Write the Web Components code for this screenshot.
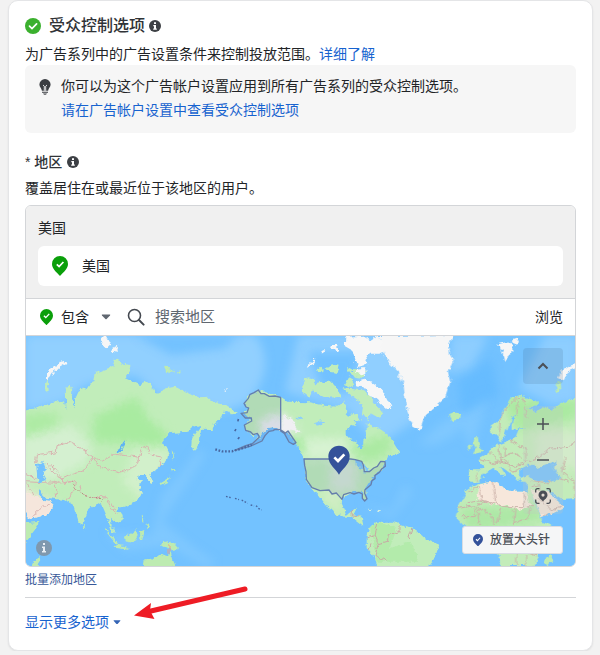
<!DOCTYPE html>
<html lang="zh-CN">
<head>
<meta charset="utf-8">
<meta name="viewport" content="width=device-width, initial-scale=1">
<title>受众控制选项</title>
<style>
  body{margin:0;padding:0 7px 0 8px;background:#f2f2f2;color:#222427;
       font:400 14px/24px "Liberation Sans","Noto Sans CJK SC",sans-serif;
       --link:#1763cf;--line:#d3d5d8;--green:#0a9f0a;--navy:#34529a;--ink:#3a3f45}
</style>
</head>
<body>
<audience-card>
  <span slot="title">受众控制选项</span>
  <span slot="intro">为广告系列中的广告设置条件来控制投放范围。</span>
  <tip-banner>
    你可以为这个广告帐户设置应用到所有广告系列的受众控制选项。
    <a slot="link" href="#settings">请在广告帐户设置中查看受众控制选项</a>
  </tip-banner>
  <location-field>
    <span slot="label">地区</span>
    <span slot="hint">覆盖居住在或最近位于该地区的用户。</span>
    <location-item slot="items">美国</location-item>
    <location-search slot="search"></location-search>
    <location-map slot="map"></location-map>
  </location-field>
  <more-options slot="footer"></more-options>
</audience-card>

<script>
(function () {
  // every element shares the same boot: style + markup into an open root
  function define(name, html, setup) {
    customElements.define(name, class extends HTMLElement {
      constructor() {
        super();
        const root = this.attachShadow({ mode: "open" });
        root.innerHTML = `<style>*{box-sizing:border-box}button,input,select{font:inherit;color:inherit;margin:0}
          a{color:var(--link);text-decoration:none}</style>` + html;
        if (setup) setup(root, this);
      }
    });
  }

  // ---- icons ----
  define("info-icon", `
    <style>:host{display:inline-flex;color:#3d4045}svg{display:block}</style>
    <svg width="12" height="12" viewBox="0 0 12 12" aria-hidden="true"><circle cx="6" cy="6" r="6" fill="currentColor"/>
      <path d="M5 2.2h2v1.9H5zM4.3 5H7v3.5h.8v1.2H4.2V8.500H5V6.200h-.7z" fill="#fff"/></svg>`);

  define("pin-icon", `
    <style>:host{display:inline-flex;width:13px;color:var(--green)}svg{display:block;width:100%;height:auto}</style>
    <svg viewBox="0 0 16 20" aria-hidden="true">
      <path d="M8 0a8 8 0 0 1 8 8c0 4.800-4.300 8-8 12C4.300 16 0 12.800 0 8a8 8 0 0 1 8-8z" fill="currentColor"/>
      <path d="M4.800 8.400l2.300 2.200L11.400 6" fill="none" stroke="#fff" stroke-width="1.700"/></svg>`);

  define("caret-icon", `
    <style>:host{display:inline-flex;width:10px;color:#606770}svg{display:block;width:100%;height:auto}</style>
    <svg viewBox="0 0 10 6" aria-hidden="true"><path d="M1.200.4h7.600q.8.200.2 1L5.600 5.100q-.6.500-1.200 0L1 1.400Q.4.600 1.200.4z" fill="currentColor"/></svg>`);

  // ---- card ----
  define("audience-card", `
    <style>
      :host{display:block;background:#fff;border:1px solid #e4e5e7;border-radius:10px;padding:12px 16px 16px;
            box-shadow:0 1px 2px rgba(0,0,0,.08)}
      h2{display:flex;align-items:center;margin:0;font-size:16px;font-weight:500;line-height:26px;color:#303337}
      .ok{margin-right:8px}
      info-icon{margin-left:4px}
      p{margin:4px 0 0;line-height:22px}
    </style>
    <h2><svg class="ok" width="16" height="16" viewBox="0 0 16 16" aria-hidden="true"><circle cx="8" cy="8" r="8" fill="#3bb02e"/>
      <path d="M4.500 8.200l2.500 2.400 4.600-4.700" fill="none" stroke="#fff" stroke-width="1.700" stroke-linecap="round"/></svg>
      <slot name="title"></slot><info-icon></info-icon></h2>
    <p><slot name="intro"></slot><a href="#learn">详细了解</a></p>
    <slot></slot>
    <slot name="footer"></slot>`);

  define("tip-banner", `
    <style>
      :host{display:flex;gap:10px;background:#f6f6f6;border-radius:6px;padding:9px 14px 11px}
      svg{flex:none;margin-top:5px}
      ::slotted(a){display:block;color:var(--link);text-decoration:none}
    </style>
    <svg width="12" height="16" viewBox="0 0 12 16" aria-hidden="true">
      <path d="M6 0a5.600 5.600 0 0 1 5.600 5.600c0 2.600-2.100 3.600-2.500 6.200H2.900C2.500 9.200.4 8.200.4 5.600A5.600 5.600 0 0 1 6 0z" fill="#3a3d42"/>
      <path d="M4 6l1.300 1.200V11.800M8 6L6.700 7.200V11.800" fill="none" stroke="#f5f6f7" stroke-width=".9"/>
      <path d="M3 12.700h6v1.100H3zM4 14.600h4q-.7 1.200-2 1.200t-2-1.200z" fill="#3a3d42"/></svg>
    <div><slot></slot><slot name="link"></slot></div>`);

  // ---- location field ----
  define("location-field", `
    <style>
      :host{display:block;margin-top:16px}
      h3{display:flex;align-items:center;gap:5px;margin:0;font-size:14px;font-weight:500;line-height:26px;color:#303337}
      p{margin:0;line-height:26px}
      .panel{margin-top:4px;border:1px solid var(--line);border-radius:6px;overflow:hidden}
      .chosen{background:#f0f0f0;padding:12px;border-bottom:1px solid var(--line)}
      .group{line-height:20px;margin-bottom:8px}
      .bulk{display:block;margin-top:4px;font-size:12px;line-height:18px;color:#385898}
    </style>
    <h3><span>* <slot name="label"></slot></span><info-icon></info-icon></h3>
    <p><slot name="hint"></slot></p>
    <div class="panel">
      <div class="chosen"><div class="group">美国</div><slot name="items"></slot></div>
      <slot name="search"></slot>
      <slot name="map"></slot>
    </div>
    <a class="bulk" href="#bulk">批量添加地区</a>`);

  define("location-item", `
    <style>:host{display:flex;align-items:center;gap:14px;height:40px;padding:0 14px;background:#fff;border-radius:6px}
      pin-icon{width:16px}</style>
    <pin-icon></pin-icon><span><slot></slot></span>`);

  define("location-search", `
    <style>
      :host{display:flex;box-sizing:border-box;align-items:center;height:37px;padding:0 12px 0 14px;background:#fff;border-bottom:1px solid var(--line)}
      .mode{display:flex;align-items:center;gap:8px}
      select{appearance:none;border:0;background:none;padding:0;width:32px;height:24px;line-height:24px;outline:0}
      .glass{flex:none;margin:0 10px 0 16px}
      label{display:contents}
      input{flex:1;min-width:0;border:0;padding:0;background:none;font-size:15px;line-height:24px;outline:0}
      input::placeholder{color:#606770;opacity:1}
      button{border:0;background:none;padding:0;line-height:24px}
    </style>
    <label class="mode"><pin-icon></pin-icon>
      <span class="mode"><select aria-label="包含或排除"><option>包含</option><option>排除</option></select><caret-icon></caret-icon></span></label>
    <label><svg class="glass" width="18" height="18" viewBox="0 0 18 18" aria-hidden="true">
      <circle cx="7.500" cy="7.500" r="6" fill="none" stroke="#444950" stroke-width="1.600"/><path d="M12 12l4.600 4.600" stroke="#444950" stroke-width="2" stroke-linecap="round"/></svg>
      <input type="text" placeholder="搜索地区" aria-label="搜索地区"></label>
    <button type="button">浏览</button>`);

  // ---- map ----
  // three tiles side by side, each drawn in its own coordinates
  define("location-map", `
    <style>
      :host{display:block;position:relative;background:#74c2ff}
      .world{display:block;width:100%;height:auto}
      .tools{position:absolute;inset:0;display:flex;flex-direction:column;align-items:flex-end;gap:12px;padding:12px}
      .tools button{display:flex;align-items:center;justify-content:center;border:0;padding:0;width:40px;height:36px;
                    background:none;color:#4b4f56}
      .tools .up{background:rgba(70,100,130,.16);border-radius:4px}
      .stack{margin-top:auto;background:rgba(190,200,195,.25);border-radius:4px}
      .tools .drop{width:auto;height:28px;padding:0 12px 0 10px;gap:7px;background:#f5f6f7;border:1px solid #d8dce2;border-radius:3px;
                   font-size:12px;font-weight:500;line-height:20px;color:#4b4f56}
      .drop pin-icon{width:10px;color:var(--navy)}
      .about{position:absolute;left:10px;bottom:10px;width:16px;height:16px;padding:0;border:0;background:none}
      .about svg{display:block}
    </style>
    <svg class="world" viewBox="3 3 1647 690" role="img" aria-label="地图">
      <defs>
        <filter id="coast" x="-5%" y="-5%" width="110%" height="110%">
          <feTurbulence type="fractalNoise" baseFrequency=".06" numOctaves="3" seed="4"/>
          <feDisplacementMap in="SourceGraphic" scale="18" xChannelSelector="R" yChannelSelector="G"/>
        </filter>
        <filter id="soft" x="-20%" y="-20%" width="140%" height="140%"><feGaussianBlur stdDeviation="14"/></filter>
        <clipPath id="asia"><path d="M-10 229L25 222 60 208 85 200 115 197 124 222 122 155 135 150 142 165 140 190 150 224 150 190 160 168 175 158 188 162 205 135 210 115 235 105 262 95 270 72 285 80 312 90 315 108 300 130 345 150 372 140 392 175 425 160 450 155 490 175 520 190 550 188 570 205 600 208 625 224 642 236 620 238 600 228 595 242 565 270 560 285 528 284 525 318 510 348 499 335 500 313 530 270 500 275 490 290 430 295 410 325 425 335 432 350 425 378 375 415 383 440 375 447 366 422 338 423 335 435 352 436 342 450 350 475 340 495 300 515 275 518 290 540 290 558 275 565 258 548 260 570 270 590 262 590 246 545 230 508 215 502 190 525 172 570 160 560 145 510 120 495 60 488 44 465 38 478 55 495 75 498 85 510 75 535 15 552 -10 520z"/></clipPath>
        <clipPath id="na"><path d="M242 185L175 165 150 178 132 205 145 220 125 235 155 250 135 270 135 285 155 300 180 300 165 320 205 282 225 278 242 285 260 290 288 325 305 350 312 372 316 430 335 460 355 480 390 525 435 545 455 545 490 572 485 545 460 540 472 515 440 540 425 505 427 490 460 470 485 470 490 497 500 495 495 465 525 420 555 390 560 365 600 350 575 310 540 285 500 265 500 290 490 315 490 342 478 342 470 320 440 310 440 285 470 265 440 235 433 195 410 215 375 212 330 202 265 200z"/></clipPath>
        <clipPath id="euro"><path d="M575 188L560 190 530 205 500 225 475 215 455 235 430 220 460 208 445 195 425 190 405 180 380 190 355 225 340 255 318 270 315 290 335 300 345 320 360 305 380 250 395 230 380 270 380 285 425 275 400 285 390 310 340 328 315 340 310 355 285 368 280 375 300 395 290 403 252 403 255 440 280 440 300 415 325 398 355 425 365 425 345 392 390 425 397 440 405 425 405 403 440 385 455 400 485 390 515 375 500 400 530 430 480 440 450 440 430 420 405 428 408 440 425 440 425 470 380 470 350 458 330 440 275 448 245 468 220 515 215 550 240 575 340 600 345 693 450 693 465 640 470 590 500 570 470 560 440 475 470 550 540 515 500 480 480 460 530 495 575 492z"/></clipPath>
      </defs>

      <rect width="1660" height="700" fill="#73c2ff"/>
      <g fill="#99d3ff" filter="url(#soft)">
        <path d="M0 0H690Q760 90 670 200L600 230 400 180 330 120 180 150 120 200 0 230z" opacity=".8"/>
        <path d="M820 0H1120L1180 250 1060 330 960 220 780 170z" opacity=".75"/>
        <path d="M1280 0h110l-50 100-70 20zM1560 0H1660V200L1580 210 1480 160z" opacity=".7"/>
        <path d="M240 590l140 10 30-120 70-80 40-60 20 20-70 110-60 90 100 80 60 40-20 20-120-70-130 20z" opacity=".35"/>
        <path d="M1180 330l60-60 110-60-60 90-60 30zM1300 250l90-80-50 180z" opacity=".35"/>
        <path d="M1000 500l100 30 40-80 20 20-60 80z" opacity=".35"/>
      </g>
      <g fill="#5fb8ff" filter="url(#soft)" opacity=".6"><path d="M330 0H640L600 40 440 60zM1300 140l100-70 20 110-110 60zM850 50l160 0-40 130-80-20z"/></g>

      <g filter="url(#coast)">
        <g clip-path="url(#asia)">
          <rect x="-10" width="700" height="610" fill="#c1edba"/>
          <g filter="url(#soft)">
            <path d="M-10 235h110l-10 65-100 10z" fill="#aeeba4"/>
            <path d="M205 245l130-60 30 60 70 60-30 30-90-10-110-5z" fill="#a9eba0"/>
            <path d="M-10 310l150-40 60 60-10 50-110 60-90-10z" fill="#d4f0d0"/>
            <path d="M330 340l100 0-10 80-60 80-70-60z" fill="#d2f0cb"/>
            <path d="M-10 450l60 40 50 20-40 60-80-10z" fill="#f8e8de"/>
          </g>
          <path d="M-10 465l50 25 45 5 10 55-105 20z" fill="#f5e6dc"/>
          <path d="M33 388l22-8 6 18-8 20 10 18-16 6-10-18z" fill="#73c2ff"/>
          <path d="M275 352l14-8 12-26" stroke="#5eb4f4" stroke-width="7" fill="none"/>
          <g fill="none" stroke="#d8b3b0" stroke-width="3">
            <path d="M32 385l2-25 60-10 2-18 38-10 35 18 38 28 25 10 36-20 72 8 14-28 12-5 15 28 30 5-8 38-14 20"/>
            <path d="M205 368l18 28 62 15 30-8 25-25 0-15M205 368l-28 40-40 12-25 12-50-38M60 380l45 35 12 30 25-8"/>
            <path d="M-10 410l45 20M0 440l90 5 5 40M90 445l60-5 0 20-20 35M165 450l5 25 35 15 35-5 15 30M210 495l30-15M255 520l25 15M0 440l30 40M20 545l30-30 25-5M240 485l30 35"/>
          </g>
          <path d="M140 440l12 20 22 20 32 10 25 5" fill="none" stroke="#b26d6b" stroke-width="3" stroke-dasharray="5 5"/>
        </g>
        <path d="M60 140l8-5 3 32-10 4z" fill="#c1edba"/>
        <path d="M62 132l4-18 20-20 35-15 3 8-36 22-18 27zM228 5l16-3 13 24-12 14-16-16zM262 38l14-5 3 20-15-2z" fill="#f6f6f6"/>
        <g fill="#bdebb1">
          <path d="M418 98l28 3 4 8-30 3zM455 108l17 2-5 5zM442 400l8 6-14 6zM436 420l-8 22-24 10 4-8 20-12zM440 340l8 28-6 2z"/>
          <path d="M240 578l40 45-5 6-38-46zM300 605l15-8 18-14 5 20-12 20-24-4zM345 590l14-6-7 30-6-2zM410 622l28-5 24 25-22 4-28-14zM350 540l8 12-6 8zM364 565l8 10-8 6zM270 628l40 8 0 5-44-6zM174 565l7 16-6 5z"/>
          <path d="M355 700l4-24 22-2 22-18 26 8 8-16 8 30 10 22zM20 700l4-20 20-14 2 12-14 22zM-5 565l50-5-18 28-32 40z"/>
        </g>
        <path d="M432 625v28" stroke="#ef9f88" stroke-width="3"/>
      </g>

      <g transform="translate(525)">
        <g filter="url(#coast)">
          <g clip-path="url(#na)">
            <rect width="620" height="600" fill="#c1edba"/>
            <g filter="url(#soft)">
              <path d="M310 310h130l10 60-140 5z" fill="#d7f3d2"/>
              <path d="M180 255l60-20 60 60-60 10-60 5z" fill="#efeef2"/>
              <path d="M260 290l50 20 10 50-40-10z" fill="#a9eba0"/>
              <path d="M390 380h80v90h-80z" fill="#d7ead6"/>
              <path d="M440 340l60 40 60-20 20-70-80 30z" fill="#abeaa2"/>
              <path d="M350 465l60 20 20 50z" fill="#dcedca"/>
            </g>
            <path d="M465 375l22 5-2 24-16-8zM492 390l20 15-18 8z" fill="#7fc8fb"/>
            <path d="M250 240l30 20 22 32-52-8z" fill="#f0eff3"/>
            <path d="M290 245l12-4 8 8-16 8zM345 265l18-6 10 6-20 10zM412 340l8 20-8 6zM355 385l8 6z" fill="#8ccffb"/>
          </g>
          <g fill="#c1edba">
            <path d="M312 130l16-6 20 22-8 14-12 28-20-16zM340 150l40-10 26 10 16 36-46 2-36-18zM348 105l12-10 12 8-16 12zM376 102l20-14 20 4-6 22-24-4zM432 150l14-26 16 10-10 26zM440 95l20 10 38 2-8 22-28-4z"/>
            <path d="M430 160l60 6 60 70-10 12-24-14-10 18-20-12 4-32-40-30zM448 240l22-4 10 20-24 4zM380 140l18 0-8 16z"/>
            <path d="M500 600l10-25 20-15 50 0 45 15 20 10 35 28 38 16-12 35-30 45H535L525 670 500 640z"/>
          </g>
          <path d="M510 575l30-15 50 20-20 60 60-20 30 60-130 0z" fill="#aeeaa5" opacity=".75"/>
          <path d="M506 518l12 2-4 6zM530 524l16 2-4 6-10-2z" fill="#d7f0e0"/>
          <g fill="#f7f7f7">
            <path d="M436 5l50-3 25 16 24-16 20 16 0 30-20 8-28 0-20 30-20-6-8-30-25-14zM465 72l28-4 12 18-30 10zM478 100l18 0 0 20-28-6zM470 140l25-6 24 14 30 20 28 54-16 0-34-30-22-6-4-28-30-4zM552 5l40 0-8 80-30-24zM320 95l26-22-2 12-20 10zM362 48l14-6-4 12zM394 30l16 0 10 20-14-2zM72 165l8-2 0 6z"/>
          </g>
          <g fill="none" stroke="#c8aaa5" stroke-width="3"><path d="M500 608l25-6 8-32M525 602l10 24 28-8M510 625l-6 20M535 626l-10 36 35 16M563 618l2-20 35-8 0-20M635 582l-10 30M455 520l-2 22 26 4"/></g>
        </g>
        <!-- outline of the selected country -->
        <g fill="#425a9a" fill-opacity=".12" stroke="#667fac" stroke-width="4" stroke-linejoin="round">
          <path d="M242 285V187L225 183 208 184 193 176 183 176 175 165 162 173 150 178 145 190 132 205 138 216 146 219 141 233 123 235 136 249 154 249 155 258 133 270 137 286 152 291 160 299 172 295 178 306 157 326 137 332 104 346 150 334 186 318 195 302 207 289 219 287 225 283 241 284 256 294 264 288 288 323 280 328 267 321 253 295 242 288z"/>
          <path d="M312 372H452L466 374 485 379 490 390 493 410 508 410 521 399 532 394 542 379 555 380 556 394 545 402 538 412 525 421 525 431 516 437 513 449 495 464 494 475 501 491 494 498 487 490 487 477 477 472 462 477 450 473 431 479 426 493 416 482 409 474 396 477 387 465 360 467 336 458 325 442 319 433 318 410 314 392z"/>
        </g>
        <g fill="none" stroke="#4766a0" stroke-width="7" stroke-dasharray="5 5"><path d="M46 343l20 6 30 0 34-10 25-10M112 255l8 2M104 284l5 3M114 308l5 4"/>
          <path d="M78 484l14 4M105 490l12 4M125 495l18 10M152 510l10 3M168 512l8 6M175 520l10 5" stroke-width="4"/></g>
      </g>

      <g transform="translate(1080)">
        <g filter="url(#coast)">
          <path d="M-20 3L205 0 193 30 195 60 205 75 192 110 198 135 180 190 150 215 120 240 104 285 85 275 70 240 62 200 55 150 40 110 10 80 0 60z" fill="#f6f6f6"/>
          <path d="M338 28l28-6 16 4 0 28-24 24-6-26zM376 18l25-8-4 16zM518 130l12-22 24-14 26-10 0 12-28 12-16 28z" fill="#f6f6f6"/>
          <path d="M512 152l12-14 2 30-10 4zM192 238l14-6 24 4-4 14-24 6zM268 312l10-4 6 26 10 16-30 8 8-20-8-14zM248 332l12-8 0 16-10 8z" fill="#bdebb1"/>
          <g clip-path="url(#euro)">
            <rect x="200" y="170" width="400" height="530" fill="#c3ecba"/>
            <g filter="url(#soft)">
              <path d="M350 190l100 0 130 0 0 60-180 40z" fill="#abeaa2"/>
              <path d="M450 290h140v110h-140z" fill="#d3ebca"/>
              <path d="M215 520l240-10 20 50-220 30z" fill="#ade8a6"/>
            </g>
            <path d="M283 450l40-15 28 22 74 14 10 45-40 10-30-18-34 5-55-25z" fill="#f7e7db"/>
            <path d="M440 465l45 5 60 35-15 30-60 20z" fill="#f3e4d9"/>
            <path d="M492 385l22-6-4 24 12 30-14 6-14-24z" fill="#73c2ff"/>
            <g fill="none" stroke="#cbb0a8" stroke-width="3">
              <path d="M342 305l5-65 50-55M395 240l5-50 16 0 12 60M382 292l0 30 40 18 0 40 40-12 30-25 60-6 24-20M315 350l25 30 60 14M340 328l6 42 38-16 28 14M360 335l0 30M285 370l40 16 30-12 30 20 34-10M370 390l10 20 30-12M275 410l0 26M440 440l40 5 20-10M440 455l24-6 0 22"/>
              <path d="M250 470l35-15 5 42-42 6M325 440l10 60M288 495l70 20 60 0 0-40M220 520l60-10 20-12M230 545l40 0 2-30M280 570l0-50 40 20 4 30M350 520l-14 45M390 520l-4 46 40-16 10-30M426 515l20 0M340 600l50-10 30 20 40-10M345 650l50-10 60 20M395 640l0 50M425 660l0 40M460 490l40 35 36-16M474 545l50-15M540 370l-10 40 40 30 0 50M520 430l30 10"/>
            </g>
          </g>
          <path d="M478 685l6-18 18-8-2 20-14 16z" fill="#bdebb1"/>
        </g>
      </g>

      <g transform="translate(942 333)">
        <path d="M0 86C-8 70-32 58-32 31a32 32 0 0 1 64 0C32 58 8 70 0 86z" fill="#34529a"/>
        <path d="M-14 34l11 11L16 25" fill="none" stroke="#fff" stroke-width="8"/>
      </g>
    </svg>
    <button class="about" type="button" aria-label="地图信息"><svg width="16" height="16" viewBox="0 0 16 16"><circle cx="8" cy="8" r="8" fill="#7f98ae"/>
      <path d="M7 3h2v2H7zM6 6.500h3V11h1v1.500H6V11h1V8H6z" fill="#e8eef4"/></svg></button>
    <div class="tools">
      <button class="up" type="button" aria-label="收起地图"><svg width="12" height="8" viewBox="0 0 12 8"><path d="M1.500 6.500L6 2l4.500 4.500" fill="none" stroke="currentColor" stroke-width="2"/></svg></button>
      <div class="stack">
        <button type="button" aria-label="放大"><svg width="12" height="12" viewBox="0 0 12 12"><path d="M0 6h12M6 0v12" stroke="currentColor" stroke-width="1.500"/></svg></button>
        <button type="button" aria-label="缩小"><svg width="12" height="12" viewBox="0 0 12 12"><path d="M0 6h12" stroke="currentColor" stroke-width="1.500"/></svg></button>
        <button type="button" aria-label="定位"><svg width="16" height="16" viewBox="0 0 16 16">
          <path d="M.7 4.500V2.500Q.7.700 2.500.700h2M11.500.700h2Q15.300.700 15.300 2.500v2M15.300 11.500v2q0 1.800-1.800 1.800h-2M4.500 15.300h-2Q.7 15.300.7 13.500v-2" fill="none" stroke="currentColor" stroke-width="1.300"/>
          <path fill-rule="evenodd" d="M8 2.500a4.500 4.500 0 0 1 4.500 4.500c0 3-3 4.500-4.500 6.500C6.500 11.500 3.500 10 3.500 7A4.500 4.500 0 0 1 8 2.500zm0 3a1.600 1.600 0 1 0 0 3.200 1.600 1.600 0 0 0 0-3.200z" fill="currentColor"/></svg></button>
      </div>
      <button class="drop" type="button"><pin-icon></pin-icon>放置大头针</button>
    </div>`);

  // ---- footer ----
  define("more-options", `
    <style>
      :host{display:block;position:relative;margin-top:8px;padding-top:12px;border-top:1px solid var(--line)}
      a{display:inline-flex;align-items:center;gap:4px}
      caret-icon{width:8px;color:#3464b5}
      .arrow{position:absolute;left:108px;top:-13px}
    </style>
    <a href="#more">显示更多选项<caret-icon></caret-icon></a>
    <svg class="arrow" width="116" height="36" viewBox="0 0 116 36" aria-hidden="true">
      <path d="M18 26L112 4" stroke="#ee1c25" stroke-width="5" stroke-linecap="round"/>
      <path d="M1 30.500L18 18l-1 7.500 4.500 8.500z" fill="#ee1c25"/></svg>`);
})();
</script>
</body>
</html>
